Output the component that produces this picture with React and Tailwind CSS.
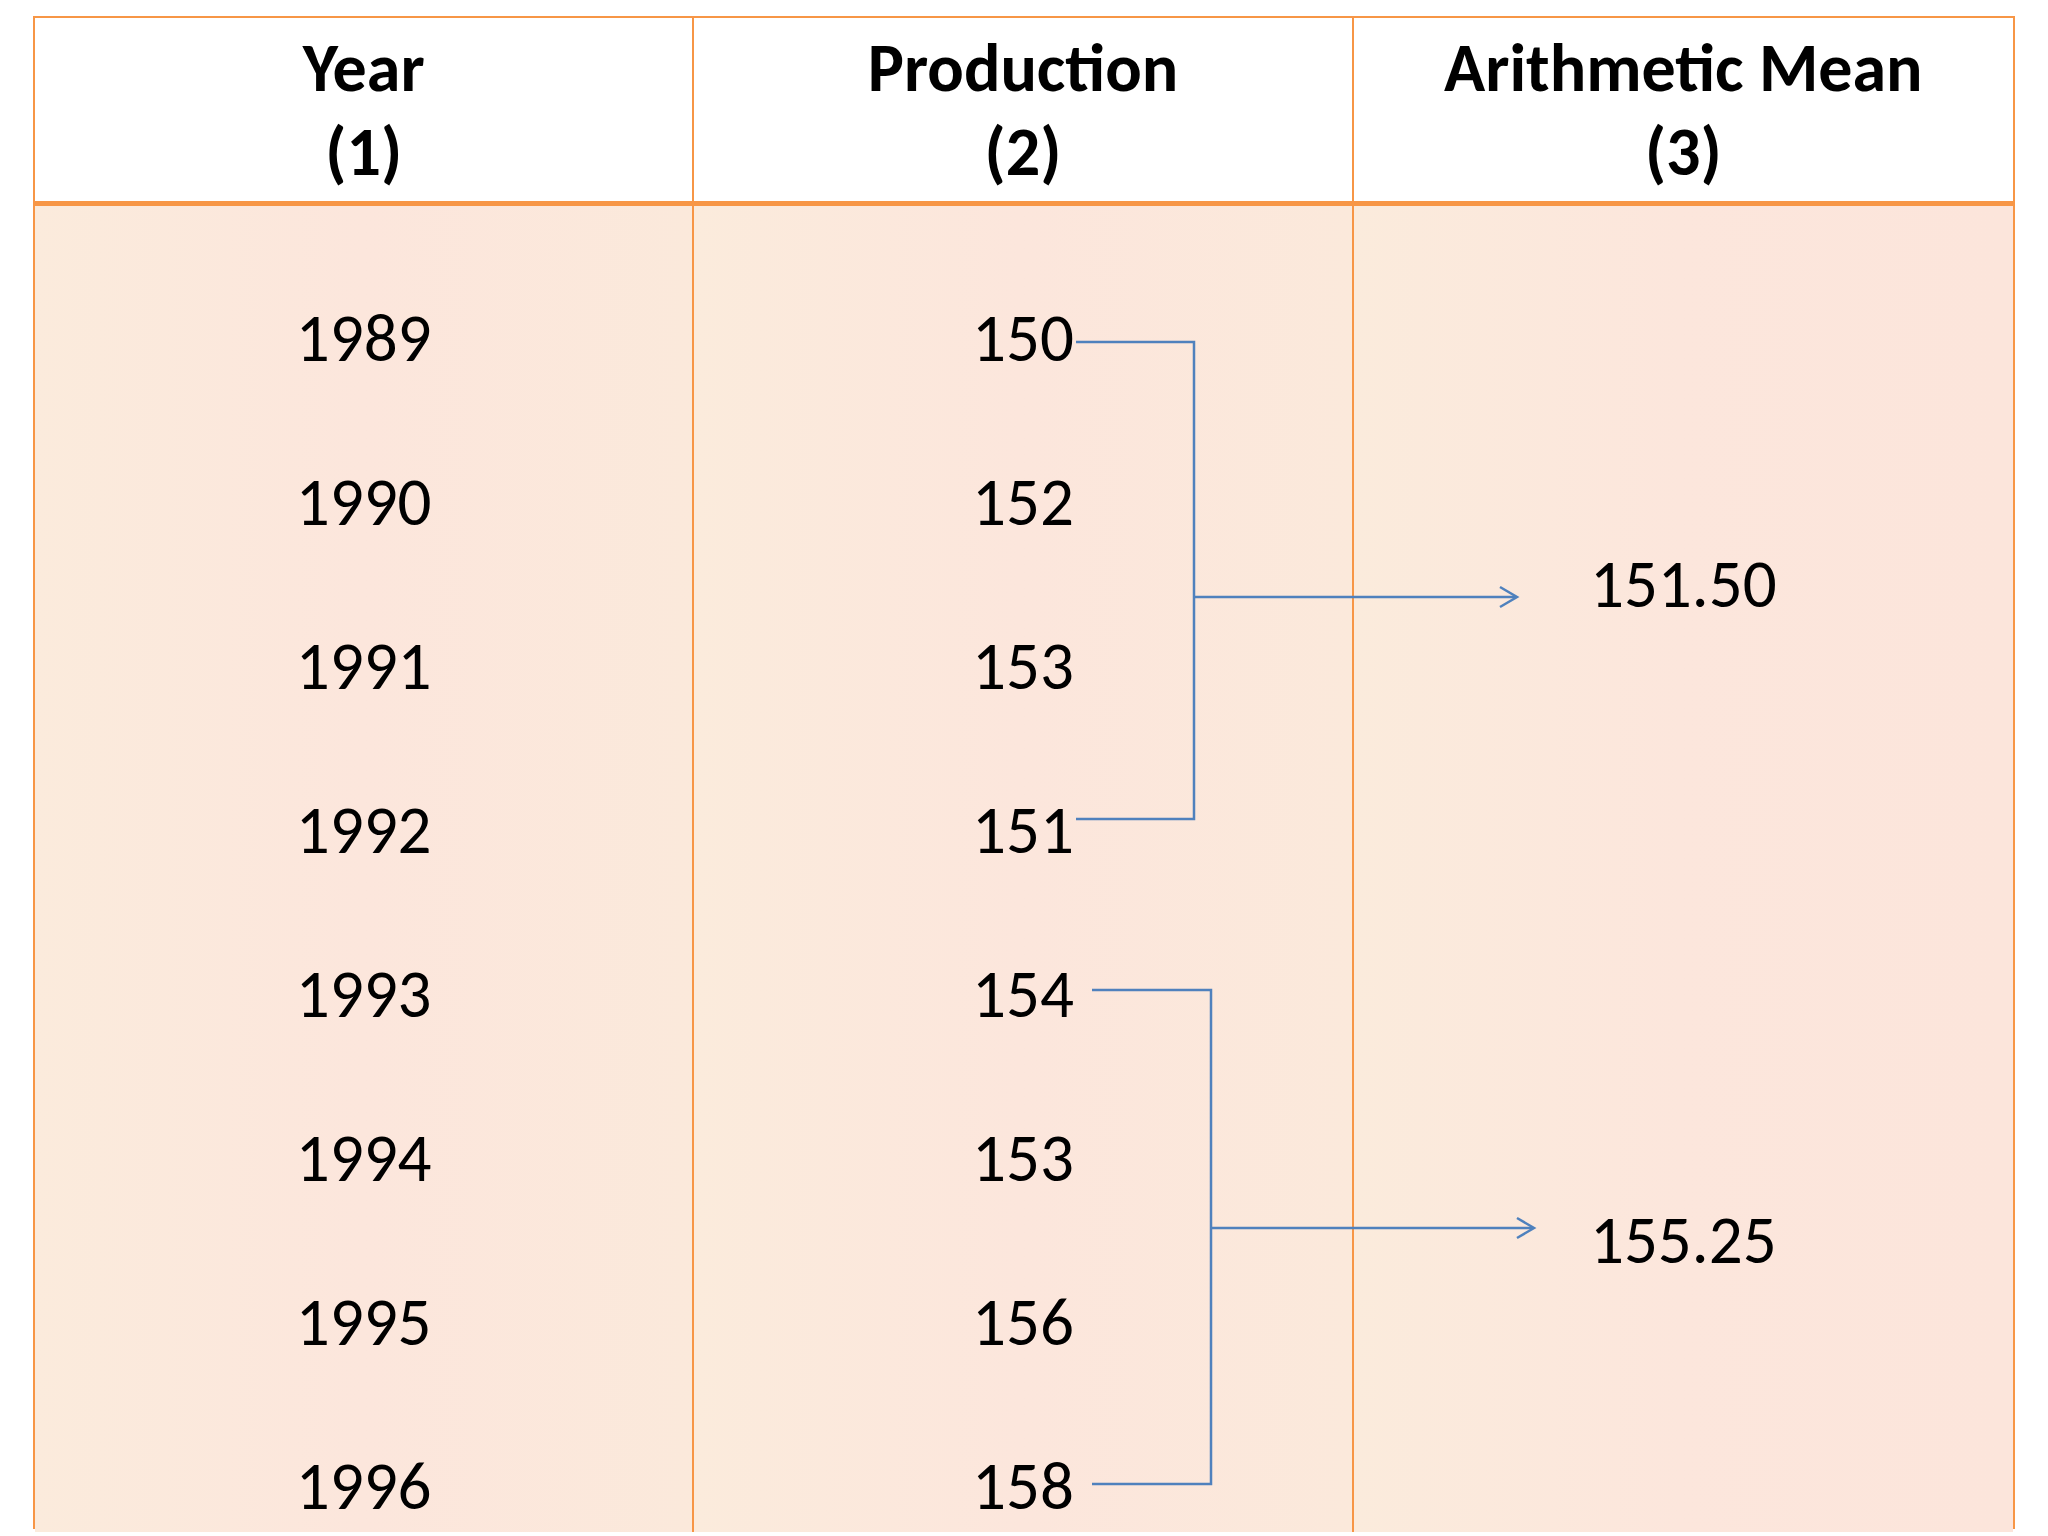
import React from "react";

const years = ["1989", "1990", "1991", "1992", "1993", "1994", "1995", "1996"];
const production = ["150", "152", "153", "151", "154", "153", "156", "158"];
const means = ["151.50", "155.25"];

const font = {
  fontFamily: "Carlito, Calibri, 'Liberation Sans Narrow', 'DejaVu Sans Condensed', Lato, sans-serif",
};

const HeaderCell = ({ title, num, last }) => (
  <div
    className={`flex flex-col items-center justify-center bg-white text-[68px] font-bold leading-[84px] text-black ${
      last ? "" : "border-r-2 border-[#f79646]"
    }`}
  >
    <span>{title}</span>
    <span>({num})</span>
  </div>
);

const BodyColumn = ({ items, last }) => (
  <div
    className={`flex flex-col items-center gap-[72px] bg-linear-to-r from-[#fbebdc] via-[#fce6dc] to-[#fbe9db] pt-[86px] text-[67px] leading-[92px] text-black ${
      last ? "" : "border-r-2 border-[#f79646]"
    }`}
  >
    {items.map((v, i) => (
      <span key={i}>{v}</span>
    ))}
  </div>
);

// the two brackets + arrows drawn over the table
const Brackets = () => (
  <svg
    className="pointer-events-none absolute left-0 top-0"
    width="2048"
    height="1536"
    viewBox="0 0 2048 1536"
    fill="none"
    stroke="#4f81bd"
    strokeWidth="2.5"
  >
    <polyline points="1076,342 1194,342 1194,819 1076,819" />
    <line x1="1194" y1="597" x2="1516" y2="597" />
    <polyline points="1500,587 1517,597 1500,607" />
    <polyline points="1092,990 1211,990 1211,1484 1092,1484" />
    <line x1="1211" y1="1228" x2="1533" y2="1228" />
    <polyline points="1517,1218 1534,1228 1517,1238" />
  </svg>
);

export default function App() {
  return (
    <div className="relative h-[1536px] w-[2048px] overflow-hidden bg-white pl-[33px] pt-[16px]" style={font}>
      <div className="w-[1982px] border-2 border-[#f79646]">
        <div className="grid h-[188px] grid-cols-3 border-b-[5px] border-[#f79646]">
          <HeaderCell title="Year" num="1" />
          <HeaderCell title="Production" num="2" />
          <HeaderCell title="Arithmetic Mean" num="3" last />
        </div>
        <div className="grid h-[1321px] grid-cols-3">
          <BodyColumn items={years} />
          <BodyColumn items={production} />
          <div className="flex flex-col items-center gap-[564px] bg-linear-to-r from-[#fbebdc] via-[#fce6dc] to-[#fce5db] pt-[332px] text-[67px] leading-[92px] text-black">
            {means.map((m) => (
              <span key={m}>{m}</span>
            ))}
          </div>
        </div>
      </div>
      <Brackets />
    </div>
  );
}
